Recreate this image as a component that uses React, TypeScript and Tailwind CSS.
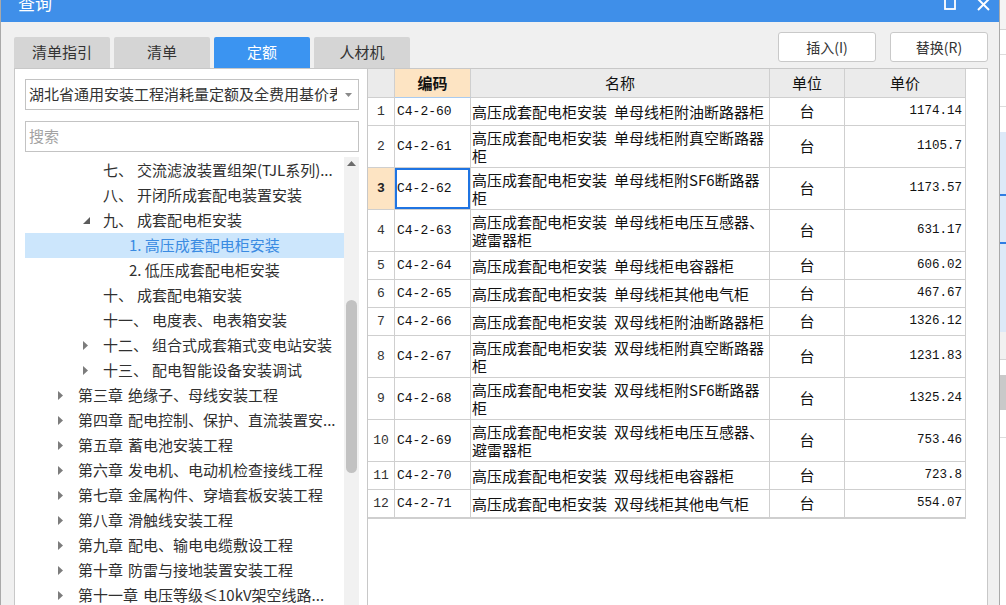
import React from "react";

type Row = {
  no: number;
  code: string;
  a: string;
  b: string;
  c?: string;
  price: string;
};

const rows: Row[] = [
  { no: 1, code: "C4-2-60", a: "高压成套配电柜安装", b: "单母线柜附油断路器柜", price: "1174.14" },
  { no: 2, code: "C4-2-61", a: "高压成套配电柜安装", b: "单母线柜附真空断路器", c: "柜", price: "1105.7" },
  { no: 3, code: "C4-2-62", a: "高压成套配电柜安装", b: "单母线柜附SF6断路器", c: "柜", price: "1173.57" },
  { no: 4, code: "C4-2-63", a: "高压成套配电柜安装", b: "单母线柜电压互感器、", c: "避雷器柜", price: "631.17" },
  { no: 5, code: "C4-2-64", a: "高压成套配电柜安装", b: "单母线柜电容器柜", price: "606.02" },
  { no: 6, code: "C4-2-65", a: "高压成套配电柜安装", b: "单母线柜其他电气柜", price: "467.67" },
  { no: 7, code: "C4-2-66", a: "高压成套配电柜安装", b: "双母线柜附油断路器柜", price: "1326.12" },
  { no: 8, code: "C4-2-67", a: "高压成套配电柜安装", b: "双母线柜附真空断路器", c: "柜", price: "1231.83" },
  { no: 9, code: "C4-2-68", a: "高压成套配电柜安装", b: "双母线柜附SF6断路器", c: "柜", price: "1325.24" },
  { no: 10, code: "C4-2-69", a: "高压成套配电柜安装", b: "双母线柜电压互感器、", c: "避雷器柜", price: "753.46" },
  { no: 11, code: "C4-2-70", a: "高压成套配电柜安装", b: "双母线柜电容器柜", price: "723.8" },
  { no: 12, code: "C4-2-71", a: "高压成套配电柜安装", b: "双母线柜其他电气柜", price: "554.07" },
];

type Node = {
  level: "chapter" | "section" | "sub";
  icon?: "open" | "closed";
  label?: string;
  text: string;
  selected?: boolean;
};

const tree: Node[] = [
  { level: "section", label: "七、", text: "交流滤波装置组架(TJL系列)..." },
  { level: "section", label: "八、", text: "开闭所成套配电装置安装" },
  { level: "section", icon: "open", label: "九、", text: "成套配电柜安装" },
  { level: "sub", text: "1. 高压成套配电柜安装", selected: true },
  { level: "sub", text: "2. 低压成套配电柜安装" },
  { level: "section", label: "十、", text: "成套配电箱安装" },
  { level: "section", label: "十一、", text: "电度表、电表箱安装" },
  { level: "section", icon: "closed", label: "十二、", text: "组合式成套箱式变电站安装" },
  { level: "section", icon: "closed", label: "十三、", text: "配电智能设备安装调试" },
  { level: "chapter", icon: "closed", label: "第三章", text: "绝缘子、母线安装工程" },
  { level: "chapter", icon: "closed", label: "第四章", text: "配电控制、保护、直流装置安..." },
  { level: "chapter", icon: "closed", label: "第五章", text: "蓄电池安装工程" },
  { level: "chapter", icon: "closed", label: "第六章", text: "发电机、电动机检查接线工程" },
  { level: "chapter", icon: "closed", label: "第七章", text: "金属构件、穿墙套板安装工程" },
  { level: "chapter", icon: "closed", label: "第八章", text: "滑触线安装工程" },
  { level: "chapter", icon: "closed", label: "第九章", text: "配电、输电电缆敷设工程" },
  { level: "chapter", icon: "closed", label: "第十章", text: "防雷与接地装置安装工程" },
  { level: "chapter", icon: "closed", label: "第十一章", text: "电压等级≤10kV架空线路..." },
];

const TreeIcon = ({ icon }: { icon?: "open" | "closed" }) => {
  if (icon === "closed")
    return (
      <svg width="5" height="9" viewBox="0 0 5 9">
        <path d="M0 0 L5 4.5 L0 9Z" fill="#7c7c7c" />
      </svg>
    );
  if (icon === "open")
    return (
      <svg width="7" height="7" viewBox="0 0 7 7">
        <path d="M7 0 L7 7 L0 7Z" fill="#5c5c5c" />
      </svg>
    );
  return null;
};

const TreeRow = ({ node }: { node: Node }) => {
  const pad =
    node.level === "chapter" ? "pl-[33px]" : node.level === "section" ? "pl-[58px]" : "pl-[84px]";
  return (
    <div
      className={`h-[25px] flex items-center whitespace-nowrap overflow-hidden ${pad} ${
        node.selected ? "bg-[#cce6fc] text-[#3a8be2]" : "text-[#303030]"
      }`}
    >
      <div className="w-[20px] shrink-0 flex items-center">
        <TreeIcon icon={node.icon} />
      </div>
      {node.label && <span>{node.label}</span>}
      {node.label && <span className={node.level === "chapter" ? "w-[5px] shrink-0" : "w-[4px] shrink-0"} />}
      <span>{node.text}</span>
    </div>
  );
};

const App = () => {
  return (
    <div className="w-[1006px] h-[605px] overflow-hidden flex bg-white font-['Noto_Sans_CJK_SC','Noto_Sans',sans-serif]">
      {/* dialog */}
      <div className="w-[1000px] h-full shrink-0 flex flex-col bg-[#f0f0f0] border-l border-r border-[#a9a9a9]">
        {/* title bar, cut off at top */}
        <div className="h-[22px] shrink-0 bg-[#3f8fe9] overflow-hidden">
          <div className="h-[20px] -mt-[7px] flex items-center pl-[17px] pr-[9px]">
            <span className="text-white text-[17px]">查询</span>
            <div className="ml-auto flex items-center gap-[21px] mt-[2px]">
              <svg width="12" height="12" viewBox="0 0 12 12">
                <rect x="1" y="1" width="10" height="10" fill="none" stroke="#fff" strokeWidth="1.8" />
              </svg>
              <svg width="13" height="13" viewBox="0 0 13 13">
                <path d="M1 1 L12 12 M12 1 L1 12" stroke="#fff" strokeWidth="2" />
              </svg>
            </div>
          </div>
        </div>

        {/* tabs + buttons */}
        <div className="h-[46px] shrink-0 flex items-end pl-[13px] pr-[11px]">
          <div className="flex gap-[4px] h-[31px] text-[15px]">
            <div className="w-[96px] rounded-t-[2px] bg-[#d5d5d5] text-[#333] flex items-center justify-center">清单指引</div>
            <div className="w-[96px] rounded-t-[2px] bg-[#d5d5d5] text-[#333] flex items-center justify-center">清单</div>
            <div className="w-[96px] rounded-t-[2px] bg-[#3b94f1] text-white flex items-center justify-center">定额</div>
            <div className="w-[96px] rounded-t-[2px] bg-[#d5d5d5] text-[#333] flex items-center justify-center">人材机</div>
          </div>
          <div className="ml-auto self-start mt-[10px] flex gap-[14px] text-[14px] text-[#333]">
            <button className="w-[98px] h-[30px] bg-white border border-[#c9c9c9] rounded-[3px] flex items-center justify-center font-['Noto_Sans_CJK_SC',sans-serif]">
              插入(I)
            </button>
            <button className="w-[98px] h-[30px] bg-white border border-[#c9c9c9] rounded-[3px] flex items-center justify-center font-['Noto_Sans_CJK_SC',sans-serif]">
              替换(R)
            </button>
          </div>
        </div>

        {/* main */}
        <div className="flex-1 min-h-0 flex pl-[13px] pr-[11px]">
          {/* left panel */}
          <div className="w-[353px] shrink-0 bg-white border-l border-t border-[#c8c8c8] pl-[10px] pr-[8px] flex flex-col">
            <div className="mt-[10px] h-[31px] shrink-0 border border-[#c3c3c3] flex items-center pl-[3px] pr-[6px]">
              <span className="flex-1 overflow-hidden whitespace-nowrap text-[15px] text-[#333]">
                湖北省通用安装工程消耗量定额及全费用基价表
              </span>
              <svg width="7" height="4" viewBox="0 0 7 4" className="ml-[8px] shrink-0">
                <path d="M0 0 L7 0 L3.5 4Z" fill="#8a8a8a" />
              </svg>
            </div>
            <div className="mt-[11px] h-[31px] shrink-0 border border-[#c3c3c3] flex items-center pl-[3px] text-[15px] text-[#a3a3a3]">
              搜索
            </div>
            <div className="mt-[5px] flex-1 min-h-0 flex">
              <div className="flex-1 min-w-0 pt-[1px] text-[15px] overflow-hidden">
                {tree.map((n, i) => (
                  <TreeRow key={i} node={n} />
                ))}
              </div>
              <div className="w-[15px] shrink-0 bg-[#f1f1f1] flex flex-col items-center">
                <svg width="9" height="5" viewBox="0 0 9 5" className="mt-[4px]">
                  <path d="M0 5 L4.5 0 L9 5Z" fill="#6c6c6c" />
                </svg>
                <div className="mt-[134px] w-[11px] h-[173px] rounded-full bg-[#c2c2c2]" />
              </div>
            </div>
          </div>

          {/* right panel */}
          <div className="flex-1 bg-white border-l border-t border-r border-[#c8c8c8]">
            <div className="w-[598px] border-b border-[#cfcfcf] text-[15px] text-[#111]">
              <div className="grid grid-cols-[27px_76px_299px_75px_121px] h-[29px] bg-[#ebebeb]">
                <div className="border-r border-b border-[#cfcfcf]" />
                <div className="border-r border-b border-b-[#a9cbf0] border-r-[#cfcfcf] bg-[#fde4c3] font-bold flex items-center justify-center">
                  编码
                </div>
                <div className="border-r border-b border-[#cfcfcf] flex items-center justify-center">名称</div>
                <div className="border-r border-b border-[#cfcfcf] flex items-center justify-center">单位</div>
                <div className="border-r border-b border-[#cfcfcf] flex items-center justify-center">单价</div>
              </div>
              {rows.map((r) => {
                const sel = r.no === 3;
                return (
                  <div
                    key={r.no}
                    className={`grid grid-cols-[27px_76px_299px_75px_121px] ${r.c ? "h-[42px]" : "h-[28px]"}`}
                  >
                    <div
                      className={`border-r border-b border-[#cfcfcf] flex items-center justify-center font-['Liberation_Mono',monospace] text-[13px] ${
                        sel ? "bg-[#fde4c3] font-bold text-[#222]" : "text-[#333]"
                      }`}
                    >
                      {r.no}
                    </div>
                    <div
                      className={`border-r border-b border-[#cfcfcf] flex items-center pl-[2px] font-['Liberation_Mono',monospace] text-[13px] ${
                        sel ? "shadow-[inset_0_0_0_2px_#1f74e2]" : ""
                      }`}
                    >
                      {r.code}
                    </div>
                    <div className="border-r border-b border-[#cfcfcf] flex flex-col justify-center pl-[1px] leading-[18px] whitespace-nowrap overflow-hidden">
                      <div className="flex">
                        <span>{r.a}</span>
                        <span className="w-[7px] shrink-0" />
                        <span>{r.b}</span>
                      </div>
                      {r.c && <div>{r.c}</div>}
                    </div>
                    <div className="border-r border-b border-[#cfcfcf] flex items-center justify-center">台</div>
                    <div className="border-r border-b border-[#cfcfcf] flex items-center justify-end pr-[3px] font-['Liberation_Mono',monospace] text-[12.5px]">
                      {r.price}
                    </div>
                  </div>
                );
              })}
            </div>
          </div>
        </div>
      </div>

      {/* sliver of the window behind */}
      <div className="flex-1 flex flex-col bg-white">
        <div className="h-[30px] bg-[#f4f4f4] border-b border-[#d4d4d4]" />
        <div className="h-[25px] border-b border-[#dcdcdc]" />
        <div className="h-[52px] border-b border-[#dcdcdc]" />
        <div className="h-[25px]" />
        <div className="h-[64px] bg-[#dde9f8] border-b-2 border-[#2f7de3]" />
        <div className="h-[48px] bg-[#dde9f8] border-b-2 border-[#2f7de3]" />
        <div className="h-[88px] bg-[#dde9f8]" />
        <div className="h-[28px] bg-[#f1f1f1] border-b border-[#d4d4d4]" />
        <div className="h-[15px]" />
        <div className="h-[35px] bg-[#c9c9c9]" />
        <div className="h-[28px] border-b border-[#dcdcdc]" />
        <div className="flex-1" />
      </div>
    </div>
  );
};

export default App;
